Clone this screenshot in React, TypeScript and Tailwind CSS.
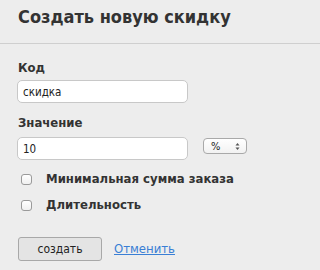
export default function App() {
  return (
    <div className="w-full h-[270px] bg-[#ededed] text-[#333] font-['DejaVu_Sans_Condensed','DejaVu_Sans',sans-serif] overflow-hidden">
      <div className="h-[44px] border-b border-[#cfcfcf] px-[18px] pt-[5px]">
        <h1 className="text-[18px] leading-[24px] font-bold text-[#333] whitespace-nowrap">Создать новую скидку</h1>
      </div>
      <form className="px-[17px] pt-[16px]">
        <label className="block text-[13px] leading-[16px] font-bold mb-[4px] pl-[1px]">Код</label>
        <input
          type="text"
          defaultValue="скидка"
          className="block w-[171px] h-[23px] bg-white border border-[#c8c8c8] rounded-[5px] px-[5px] text-[11.5px] text-[#222] focus:outline-none"
        />
        <label className="block text-[13px] leading-[16px] font-bold mt-[12px] mb-[6px] pl-[1px]">Значение</label>
        <div className="flex items-start gap-[15px]">
          <input
            type="text"
            defaultValue="10"
            className="block w-[171px] h-[23px] bg-white border border-[#c8c8c8] rounded-[5px] px-[5px] text-[11.5px] text-[#222] focus:outline-none"
          />
          <div className="relative mt-[1px] w-[44px] h-[16px] bg-gradient-to-b from-white to-[#f2f2f2] border border-[#a9a9a9] rounded-[4px] flex items-center pl-[7px] text-[11px] leading-none text-[#222]">
            %
            <svg className="absolute right-[6px] top-[2.5px]" width="5" height="9" viewBox="0 0 5 9">
              <path d="M0.5 3.5 L2.5 1 L4.5 3.5 Z" fill="#555" />
              <path d="M0.5 5.5 L2.5 8 L4.5 5.5 Z" fill="#555" />
            </svg>
          </div>
        </div>
        <label className="flex items-center mt-[11px] text-[13px] leading-[16px] font-bold whitespace-nowrap">
          <span className="ml-[4px] w-[11px] h-[11px] bg-gradient-to-b from-white to-[#f0f0f0] border border-[#9a9a9a] rounded-[3px]" />
          <span className="ml-[14px]">Минимальная сумма заказа</span>
        </label>
        <label className="flex items-center mt-[10px] text-[13px] leading-[16px] font-bold whitespace-nowrap">
          <span className="ml-[4px] w-[11px] h-[11px] bg-gradient-to-b from-white to-[#f0f0f0] border border-[#9a9a9a] rounded-[3px]" />
          <span className="ml-[14px]">Длительность</span>
        </label>
        <div className="flex items-center mt-[24px] pl-[1px]">
          <button
            type="button"
            className="w-[84px] h-[24px] bg-[#e4e4e4] border border-[#a8a8a8] rounded-[3px] text-[12px] text-[#222]"
          >
            создать
          </button>
          <a href="#" className="ml-[12px] text-[13px] text-[#3a7fd5] underline">Отменить</a>
        </div>
      </form>
    </div>
  );
}
